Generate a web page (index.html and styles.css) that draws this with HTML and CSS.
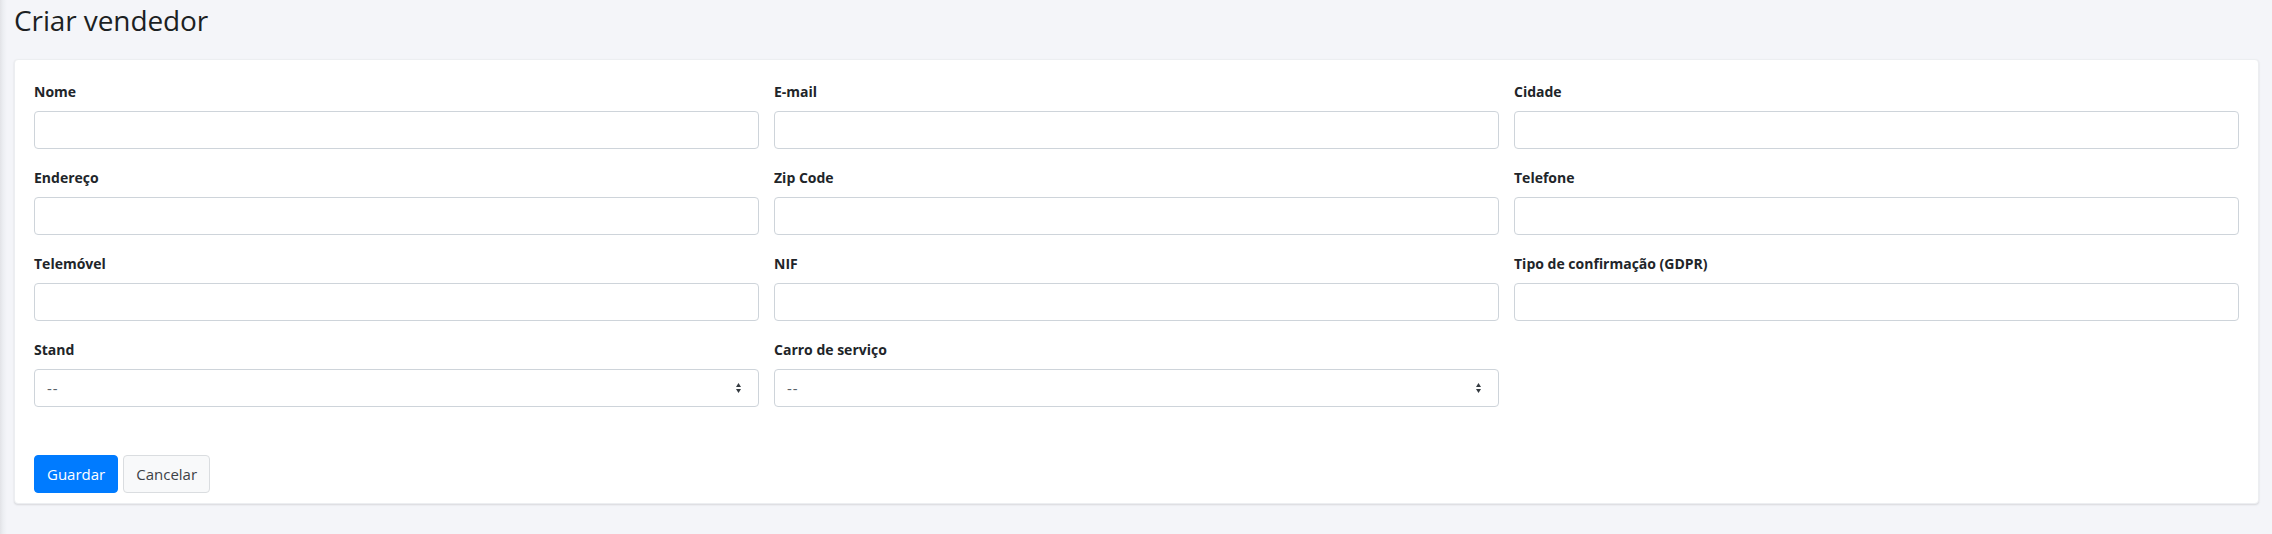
FILE: index.html
```html
<!DOCTYPE html>
<html lang="pt">
<head>
<meta charset="utf-8">
<title>Criar vendedor</title>
<link rel="stylesheet" href="styles.css">
</head>
<body>
<div class="page">
  <h3 class="page-title">Criar vendedor</h3>
  <div class="card">
    <form class="form-grid">
      <div class="field">
        <label class="field-label">Nome</label>
        <input class="field-input" type="text">
      </div>
      <div class="field">
        <label class="field-label">E-mail</label>
        <input class="field-input" type="text">
      </div>
      <div class="field">
        <label class="field-label">Cidade</label>
        <input class="field-input" type="text">
      </div>
      <div class="field">
        <label class="field-label">Endereço</label>
        <input class="field-input" type="text">
      </div>
      <div class="field">
        <label class="field-label">Zip Code</label>
        <input class="field-input" type="text">
      </div>
      <div class="field">
        <label class="field-label">Telefone</label>
        <input class="field-input" type="text">
      </div>
      <div class="field">
        <label class="field-label">Telemóvel</label>
        <input class="field-input" type="text">
      </div>
      <div class="field">
        <label class="field-label">NIF</label>
        <input class="field-input" type="text">
      </div>
      <div class="field">
        <label class="field-label">Tipo de confirmação (GDPR)</label>
        <input class="field-input" type="text">
      </div>
      <div class="field">
        <label class="field-label">Stand</label>
        <div class="select-wrap">
          <select class="field-select"><option>--</option></select>
          <svg class="select-arrow" width="5" height="10" viewBox="0 0 5 10"><path d="M2.5 0L0 4h5zM2.5 10L0 6h5z" fill="#343a40"/></svg>
        </div>
      </div>
      <div class="field">
        <label class="field-label">Carro de serviço</label>
        <div class="select-wrap">
          <select class="field-select"><option>--</option></select>
          <svg class="select-arrow" width="5" height="10" viewBox="0 0 5 10"><path d="M2.5 0L0 4h5zM2.5 10L0 6h5z" fill="#343a40"/></svg>
        </div>
      </div>
    </form>
    <div class="actions">
      <button class="btn btn-primary" type="button">Guardar</button>
      <button class="btn btn-light" type="button">Cancelar</button>
    </div>
  </div>
</div>
</body>
</html>
```

FILE: styles.css
```css
html, body {
  margin: 0;
  padding: 0;
}
body {
  background: linear-gradient(to right, #e2e3e7 0, #eceef2 3px, #f4f5f9 7px);
  font-family: "Open Sans", "Noto Sans", sans-serif;
  color: #212529;
  min-height: 534px;
}
.page {
  padding: 0 13px 0 14px;
}
.page-title {
  margin: 0;
  padding-top: 1px;
  height: 58px;
  font-size: 28px;
  font-weight: 500;
  line-height: 38px;
  letter-spacing: -0.1px;
  color: #1c1f23;
}
.card {
  background: #fff;
  border-radius: 4px;
  border: 1px solid #eceef1;
  box-shadow: 0 1px 2px rgba(0, 0, 0, 0.12);
  padding: 20px 19px 10px 19px;
}
.form-grid {
  display: grid;
  grid-template-columns: repeat(3, 1fr);
  column-gap: 15px;
  row-gap: 17px;
  margin: 0;
}
.field {
  display: flex;
  flex-direction: column;
}
.field-label {
  font-size: 14px;
  font-weight: 700;
  line-height: 24px;
  margin-bottom: 7px;
  color: #212529;
}
.field-input,
.field-select {
  box-sizing: border-box;
  height: 38px;
  width: 100%;
  border: 1px solid #ced4da;
  border-radius: 4px;
  background: #fff;
  font-family: inherit;
  font-size: 15px;
  color: #5a6168;
  padding: 0 12px;
  margin: 0;
  outline: none;
}
.select-wrap {
  position: relative;
}
.field-select {
  appearance: none;
  -webkit-appearance: none;
  padding-left: 12px;
  letter-spacing: 1px;
}
.select-arrow {
  position: absolute;
  right: 18px;
  top: 14px;
  pointer-events: none;
}
.actions {
  display: flex;
  gap: 5px;
  margin-top: 48px;
}
.btn {
  box-sizing: border-box;
  height: 38px;
  padding: 0 12px;
  border-radius: 4px;
  font-family: inherit;
  font-size: 15px;
  line-height: 36px;
  cursor: pointer;
}
.btn-primary {
  background: #007bff;
  border: 1px solid #007bff;
  color: #fff;
}
.btn-light {
  background: #f8f9fa;
  border: 1px solid #dadde0;
  color: #3d4246;
}
```
